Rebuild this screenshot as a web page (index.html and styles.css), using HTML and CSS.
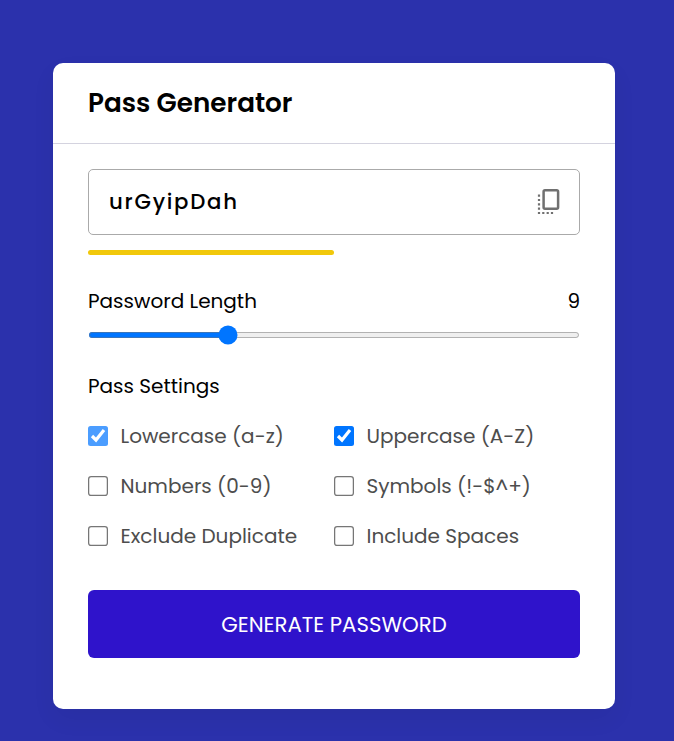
FILE: index.html
```html
<!DOCTYPE html>
<html lang="en">
<head>
<meta charset="utf-8">
<title>Pass Generator</title>
<link rel="stylesheet" href="styles.css">
</head>
<body>
<main class="card">
  <h1 class="title">Pass Generator</h1>
  <div class="content">
    <div class="output">
      <span class="password">urGyipDah</span>
      <svg class="copy" width="24" height="28" viewBox="0 0 24 28" fill="none">
        <rect x="6.6" y="2.3" width="14.5" height="18.4" rx="1.4" stroke="#707070" stroke-width="2.5"/>
        <path d="M.9 6.6h2.2v2.2H.9zM.9 10.9h2.2v2.2H.9zM.9 15.2h2.2v2.2H.9zM.9 19.6h2.2v2.2H.9zM.9 23.9h2.2v2.2H.9zM5.2 23.9h2.2v2.2H5.2zM9.6 23.9h2.2v2.2H9.6zM13.9 23.9h2.2v2.2h-2.2z" fill="#707070"/>
      </svg>
    </div>
    <div class="strength"><div class="strength-bar"></div></div>
    <div class="length"><span>Password Length</span><span>9</span></div>
    <input class="range" type="range" min="1" max="30" value="9">
    <p class="settings-title">Pass Settings</p>
    <div class="options">
      <label class="option locked"><input type="checkbox" checked><span>Lowercase (a-z)</span></label>
      <label class="option"><input type="checkbox" checked><span>Uppercase (A-Z)</span></label>
      <label class="option"><input type="checkbox"><span>Numbers (0-9)</span></label>
      <label class="option"><input type="checkbox"><span>Symbols (!-$^+)</span></label>
      <label class="option"><input type="checkbox"><span>Exclude Duplicate</span></label>
      <label class="option"><input type="checkbox"><span>Include Spaces</span></label>
    </div>
    <button class="generate">GENERATE PASSWORD</button>
  </div>
</main>
</body>
</html>
```
FILE: styles.css
```css
* { box-sizing: border-box; margin: 0; padding: 0; }
body {
  min-height: 741px;
  padding: 63px 59px 32px 53px;
  overflow: hidden;
  background: #2b31ac;
  font-family: Poppins, Inter, sans-serif;
  font-size: 20px;
  color: #000;
}
.card {
  height: 646px;
  border-radius: 10px;
  background: #fff;
  box-shadow: 0 10px 25px rgba(0, 0, 0, .05);
}
.title {
  height: 81px;
  padding-left: 35px;
  border-bottom: 1px solid #d4d3df;
  font-size: 26.25px;
  font-weight: 600;
  line-height: 80px;
}
.content { padding: 25px 35px 0; }
.output {
  display: flex;
  align-items: center;
  justify-content: space-between;
  height: 66px;
  padding: 0 18px 0 20px;
  border: 1px solid #aaa;
  border-radius: 5px;
}
.password { padding-bottom: 1px; font-size: 21.25px; font-weight: 500; letter-spacing: 1.75px; }
.copy { display: block; }
.strength { height: 5px; margin-top: 15px; }
.strength-bar { width: 50%; height: 5px; border-radius: 5px; background: #f1c80b; }
.length {
  display: flex;
  justify-content: space-between;
  margin-top: 31px;
  line-height: 30px;
}
.range { display: block; width: 393.6px; height: 5px; margin: 12.4px 0; zoom: 1.25; }
.settings-title { margin-top: 33px; line-height: 30px; }
.options {
  display: grid;
  grid-template-columns: 1fr 1fr;
  row-gap: 20px;
  margin-top: 20px;
  color: #4d4d4d;
}
.option { display: flex; align-items: center; height: 30px; white-space: nowrap; }
.option input { width: 16px; height: 16px; margin-right: 10px; zoom: 1.25; }
.locked input { opacity: .7; }
.generate {
  display: block;
  width: 100%;
  height: 68px;
  margin-top: 39px;
  padding-top: 2px;
  border: 0;
  border-radius: 6px;
  background: #2f13cb;
  color: #fff;
  font: inherit;
  font-size: 21.25px;
}
```
